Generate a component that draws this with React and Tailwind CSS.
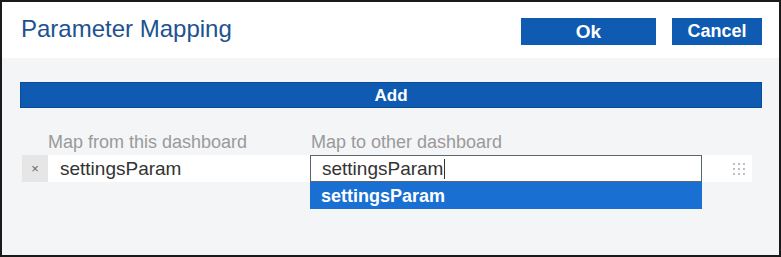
import React from "react";

const GripIcon = () => (
  <svg width="14" height="12" viewBox="0 0 14 12" className="text-gray-400">
    {[1, 6, 11].map((y) =>
      [2, 7, 12].map((x) => <circle key={`${x}-${y}`} cx={x} cy={y} r="0.9" fill="currentColor" />)
    )}
  </svg>
);

const App = () => {
  return (
    <div
      className="w-[781px] h-[257px] border-2 border-[#1a1a1a] bg-[#f4f5f7] flex flex-col overflow-hidden"
      style={{ fontFamily: '"Liberation Sans", Arial, sans-serif' }}
    >
      <div className="h-[56px] bg-white flex items-center justify-between pl-[19px] pr-[17px] shrink-0">
        <h1 className="text-[24px] text-[#1d5291] leading-none pb-[2px]">Parameter Mapping</h1>
        <div className="flex gap-[16px] pt-[2px]">
          <button className="w-[135px] h-[27px] bg-[#0e5bb1] text-white text-[19px] font-bold leading-none">
            Ok
          </button>
          <button className="w-[90px] h-[27px] bg-[#0e5bb1] text-white text-[18px] font-bold leading-none">
            Cancel
          </button>
        </div>
      </div>

      <div className="flex flex-col pl-[18px] pr-[17px] pt-[24px]">
        <button className="h-[26px] w-full bg-[#0e5bb1] border border-[#0b4c96] text-white text-[17px] font-bold leading-none">
          Add
        </button>

        <div className="flex mt-[25px] text-[18px] text-[#9a9a9a] leading-none">
          <span className="ml-[28px] w-[263px]">Map from this dashboard</span>
          <span>Map to other dashboard</span>
        </div>

        <div className="flex mt-[4px] h-[27px] pl-[2px]">
          <div className="w-[26px] bg-[#e6e6e6] flex items-center justify-center text-[13px] text-[#666]">×</div>
          <div className="flex-1 bg-white flex items-center mr-[10px]">
            <div className="w-[262px] pl-[12px] text-[19px] text-[#333] leading-none">settingsParam</div>
            <div className="relative w-[392px] h-[27px]">
              <div className="h-full border border-[#5a6670] flex items-center pl-[11px] text-[19px] text-[#333] leading-none">
                settingsParam<span className="w-px h-[20px] bg-[#333] ml-px" />
              </div>
              <div className="absolute left-0 top-[27px] w-full h-[27px] bg-[#1a6fd2] flex items-center pl-[11px] text-white text-[18px] font-bold leading-none">
                settingsParam
              </div>
            </div>
            <div className="flex-1 flex items-center justify-end pr-[6px]">
              <GripIcon />
            </div>
          </div>
        </div>
      </div>
    </div>
  );
};

export default App;
